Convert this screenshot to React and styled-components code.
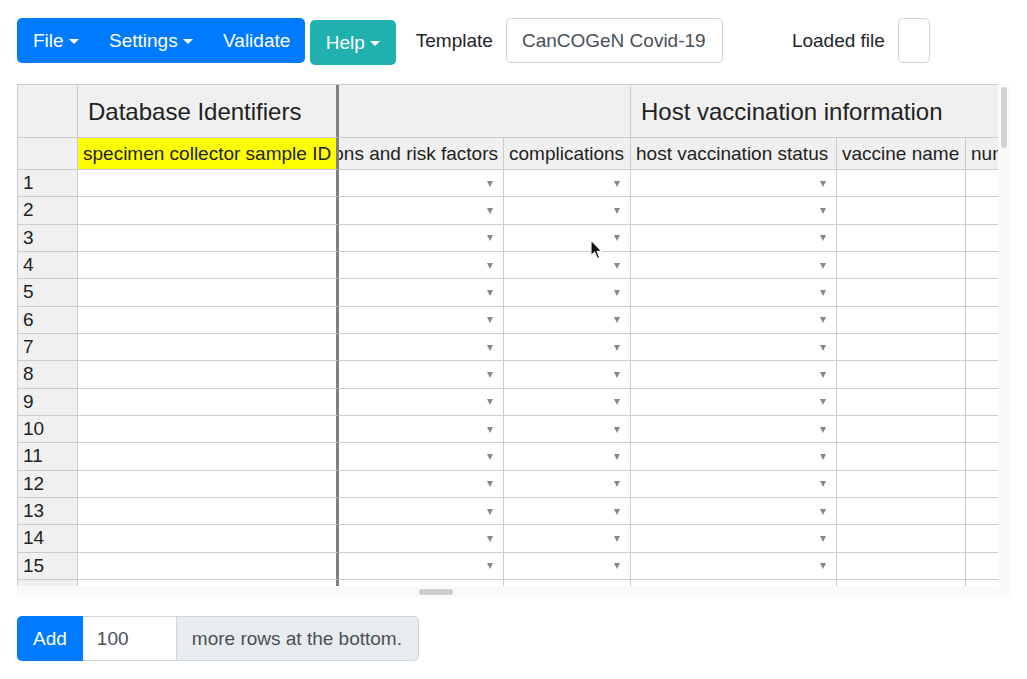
import React from 'react';
import styled, { createGlobalStyle } from 'styled-components';

const GlobalStyle = createGlobalStyle`
  body {
    margin: 0;
    background: #fff;
    font-family: "Liberation Sans", Arial, Helvetica, sans-serif;
    color: #212529;
  }
`;

const SECTIONS = [
  { label: 'Database Identifiers', width: 261, frozen: true },
  { label: '', width: 292 },
  { label: 'Host vaccination information', width: 620 },
];

const COLUMNS = [
  { label: 'specimen collector sample ID', width: 261, frozen: true, required: true },
  { label: 'pre-existing conditions and risk factors', width: 165, picklist: true, clipped: true },
  { label: 'complications', width: 127, picklist: true },
  { label: 'host vaccination status', width: 206, picklist: true },
  { label: 'vaccine name', width: 129 },
  { label: 'number of vaccine doses received', width: 290 },
];

const ROW_COUNT = 16;
const ROW_HEIGHT = 27.33;

// scrollbar thumbs (px from track start)
const H_THUMB = { offset: 402, size: 34 };
const V_THUMB = { offset: 3, size: 61 };

export default function App() {
  const rows = Array.from({ length: ROW_COUNT }, (_, i) => i + 1);

  return (
    <>
      <GlobalStyle />
      <Page>
        <Toolbar>
          <BtnGroup>
            <ToolButton>File<Caret /></ToolButton>
            <ToolButton>Settings<Caret /></ToolButton>
            <ToolButton>Validate</ToolButton>
          </BtnGroup>
          <HelpButton>Help<Caret /></HelpButton>

          <Label $gap={20}>Template</Label>
          <Field $width={217}>CanCOGeN Covid-19</Field>

          <Label $gap={69}>Loaded file</Label>
          <Field $width={31} />
        </Toolbar>

        <Grid>
          <GridBody>
            <Viewport>
              <Table>
                <Row $h={53}>
                  <Corner />
                  {SECTIONS.map((s, i) => (
                    <SectionCell key={i} $w={s.width} $frozen={s.frozen}>
                      {s.label}
                    </SectionCell>
                  ))}
                </Row>

                <Row $h={32}>
                  <Corner />
                  {COLUMNS.map((c, i) => (
                    <HeadCell
                        key={i}
                        $w={c.width}
                        $frozen={c.frozen}
                        $required={c.required}
                        $clipped={c.clipped}>
                      {c.label}
                    </HeadCell>
                  ))}
                </Row>

                {rows.map(n => (
                  <Row key={n} $h={ROW_HEIGHT}>
                    <RowHeader>{n}</RowHeader>
                    {COLUMNS.map((c, i) => (
                      <DataCell key={i} $w={c.width} $frozen={c.frozen}>
                        {c.picklist && <Arrow />}
                      </DataCell>
                    ))}
                  </Row>
                ))}
              </Table>

              <Cursor width="14" height="21" viewBox="0 0 14 21">
                <path
                    d="M1 1 L1 16.5 L4.6 13.2 L7.3 19.4 L9.6 18.4 L7 12.4 L11.8 12.4 Z"
                    fill="#111"
                    stroke="#fff"
                    strokeWidth="1.1"
                    strokeLinejoin="round" />
              </Cursor>
            </Viewport>

            <VTrack>
              <VThumb $offset={V_THUMB.offset} $size={V_THUMB.size} />
            </VTrack>
          </GridBody>

          <HTrack>
            <HThumb $offset={H_THUMB.offset} $size={H_THUMB.size} />
          </HTrack>
        </Grid>

        <AddGroup>
          <AddButton>Add</AddButton>
          <CountInput>100</CountInput>
          <Addon>more rows at the bottom.</Addon>
        </AddGroup>
      </Page>
    </>
  );
}

const Page = styled.div`
  padding: 18px 17px;
`;

/* ---------- toolbar ---------- */

const Toolbar = styled.div`
  display: flex;
  align-items: flex-start;
  height: 47px;
`;
const BtnGroup = styled.div`
  display: flex;
  height: 45px;
  border-radius: 5px;
  overflow: hidden;
  background: #007bff;
`;
const ToolButton = styled.div`
  display: flex;
  align-items: center;
  height: 100%;
  padding: 0 14.4px 0 16px;
  font-size: 19px;
  color: #fff;
  cursor: pointer;
`;
const HelpButton = styled(ToolButton)`
  height: 45px;
  margin: 2px 0 0 5px;
  padding-right: 16px;
  border-radius: 5px;
  background: #20b0ae;
`;
const Caret = styled.span`
  display: inline-block;
  margin-left: 5px;
  margin-top: 1px;
  border-top: 5.5px solid currentColor;
  border-left: 5px solid transparent;
  border-right: 5px solid transparent;
`;
const Label = styled.div`
  display: flex;
  align-items: center;
  height: 45px;
  margin-left: ${p => p.$gap}px;
  margin-right: 13px;
  font-size: 19px;
  color: #212529;
`;
const Field = styled.div`
  box-sizing: border-box;
  display: flex;
  align-items: center;
  width: ${p => p.$width}px;
  height: 45px;
  padding: 0 15px;
  border: 1px solid #ced4da;
  border-radius: 5px;
  font-size: 19px;
  color: #495057;
  white-space: nowrap;
`;

/* ---------- grid ---------- */

const Grid = styled.div`
  display: flex;
  flex-direction: column;
  width: 993px;
  margin-top: 19px;
  background: #fafafa;
`;
const GridBody = styled.div`
  display: flex;
`;
const Viewport = styled.div`
  position: relative;
  width: 981px;
  height: 502px;
  overflow: hidden;
  background: #fff;
`;
const Table = styled.div`
  width: max-content;
  border-top: 1px solid #ccc;
  border-left: 1px solid #ccc;
  color: #222;
`;
const Row = styled.div`
  display: flex;
  height: ${p => p.$h}px;
`;
const Cell = styled.div`
  flex: none;
  box-sizing: border-box;
  display: flex;
  align-items: center;
  width: ${p => p.$w}px;
  height: 100%;
  overflow: hidden;
  white-space: nowrap;
  border-bottom: 1px solid #ccc;
  border-right: ${p => (p.$frozen ? '3px solid #808080' : '1px solid #ccc')};
`;
const Corner = styled(Cell).attrs({ $w: 60 })`
  background: #f0f0f0;
`;
const SectionCell = styled(Cell)`
  padding: 2px 10px 0;
  background: #f0f0f0;
  font-size: 24px;
`;
const HeadCell = styled(Cell)`
  justify-content: ${p => (p.$clipped ? 'flex-end' : 'flex-start')};
  padding: 0 5px;
  background: ${p => (p.$required ? '#ffff00' : '#f0f0f0')};
  font-size: 19px;
`;
const RowHeader = styled(Cell).attrs({ $w: 60 })`
  padding: 0 5px;
  background: #f0f0f0;
  font-size: 19px;
`;
const DataCell = styled(Cell)`
  justify-content: flex-end;
  padding: 0 10px;
  background: #fff;
`;
const Arrow = styled.span`
  display: block;
  margin-top: 1px;
  border-top: 6px solid #888;
  border-left: 3.5px solid transparent;
  border-right: 3.5px solid transparent;
`;
const Cursor = styled.svg`
  position: absolute;
  left: 573px;
  top: 155px;
`;
const VTrack = styled.div`
  display: flex;
  justify-content: center;
  width: 12px;
`;
const VThumb = styled.div`
  width: 6px;
  height: ${p => p.$size}px;
  margin-top: ${p => p.$offset}px;
  border-radius: 3px;
  background: #d3d3d3;
`;
const HTrack = styled.div`
  display: flex;
  align-items: center;
  height: 11px;
`;
const HThumb = styled.div`
  width: ${p => p.$size}px;
  height: 6px;
  margin-left: ${p => p.$offset}px;
  border-radius: 3px;
  background: #cfcfcf;
`;

/* ---------- add rows ---------- */

const AddGroup = styled.div`
  display: flex;
  height: 45px;
  margin-top: 19px;
  font-size: 19px;
`;
const AddButton = styled.div`
  display: flex;
  align-items: center;
  padding: 0 16px;
  border-radius: 5px 0 0 5px;
  background: #007bff;
  color: #fff;
`;
const CountInput = styled.div`
  box-sizing: border-box;
  display: flex;
  align-items: center;
  width: 94px;
  padding: 0 14px;
  border: 1px solid #ced4da;
  border-left: none;
  color: #495057;
`;
const Addon = styled.div`
  display: flex;
  align-items: center;
  padding: 0 16px 0 15px;
  border: 1px solid #ced4da;
  border-left: none;
  border-radius: 0 5px 5px 0;
  background: #e9ecef;
  color: #495057;
`;
